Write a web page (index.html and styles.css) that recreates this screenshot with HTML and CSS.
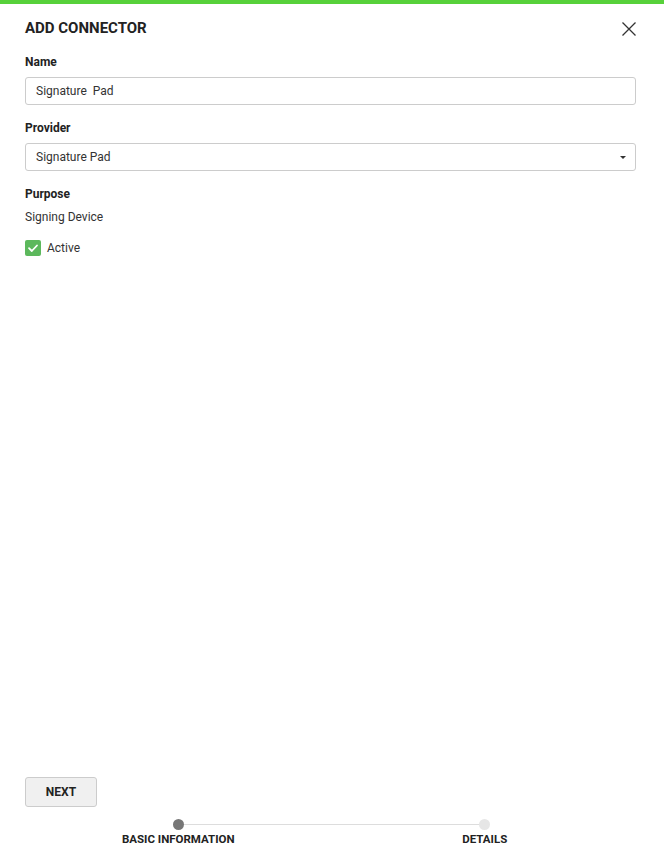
FILE: index.html
```html
<!DOCTYPE html>
<html>
<head>
<meta charset="utf-8">
<link rel="stylesheet" href="styles.css">
</head>
<body>
<div class="dialog">
  <div class="topbar"></div>
  <div class="header">
    <h1 class="title">ADD CONNECTOR</h1>
    <button class="close" aria-label="Close">
      <svg width="16" height="16" viewBox="0 0 16 16"><path d="M1.5 1.5 L14.5 14.5 M14.5 1.5 L1.5 14.5" stroke="#333" stroke-width="1.3" fill="none"/></svg>
    </button>
  </div>
  <div class="body">
    <div class="field">
      <div class="label">Name</div>
      <div class="input">Signature&nbsp; Pad</div>
    </div>
    <div class="field">
      <div class="label">Provider</div>
      <div class="input select">Signature Pad<span class="caret"></span></div>
    </div>
    <div class="field">
      <div class="label">Purpose</div>
      <div class="value">Signing Device</div>
    </div>
    <div class="check-row">
      <span class="checkbox">
        <svg width="16" height="16" viewBox="0 0 16 16"><path d="M4 8.2 L6.8 11 L12 5.5" stroke="#fff" stroke-width="1.8" fill="none" stroke-linecap="round" stroke-linejoin="round"/></svg>
      </span>
      <span class="check-label">Active</span>
    </div>
  </div>
  <div class="footer">
    <button class="btn">NEXT</button>
    <div class="stepper">
      <div class="step active">
        <span class="dot"></span>
        <span class="step-label">BASIC INFORMATION</span>
      </div>
      <div class="step">
        <span class="dot"></span>
        <span class="step-label">DETAILS</span>
      </div>
    </div>
  </div>
</div>
</body>
</html>
```
FILE: styles.css
```css
* { box-sizing: border-box; }
html, body { margin: 0; padding: 0; }
body {
  font-family: Roboto, "Liberation Sans", sans-serif;
  color: #222;
  background: #fff;
}
.dialog {
  width: 664px;
  height: 858px;
  display: flex;
  flex-direction: column;
}
.topbar {
  height: 4px;
  background: #57d13a;
  flex: none;
}
.header {
  display: flex;
  align-items: center;
  justify-content: space-between;
  padding: 14px 27px 0 25px;
}
.title {
  margin: 0;
  font-size: 15px;
  line-height: 21px;
  font-weight: 700;
  color: #222;
}
.close {
  border: 0;
  background: none;
  padding: 0;
  width: 16px;
  height: 16px;
  display: flex;
  cursor: pointer;
}
.body {
  flex: 1;
  padding: 15px 28px 0 25px;
}
.field { margin-bottom: 15px; }
.label {
  font-size: 12px;
  line-height: 16px;
  font-weight: 700;
  color: #222;
  margin-bottom: 7px;
}
.input {
  height: 28px;
  border: 1px solid #ccc;
  border-radius: 3px;
  font-size: 12px;
  line-height: 26px;
  padding: 0 10px;
  color: #333;
  display: flex;
  align-items: center;
}
.select { justify-content: space-between; }
.caret {
  width: 0;
  height: 0;
  border-left: 3px solid transparent;
  border-right: 3px solid transparent;
  border-top: 3px solid #333;
  margin-right: -1px;
}
.value {
  font-size: 12px;
  line-height: 16px;
  color: #333;
}
.check-row {
  display: flex;
  align-items: center;
  gap: 6px;
}
.checkbox {
  width: 16px;
  height: 16px;
  border-radius: 2px;
  background: #5cb85c;
  display: flex;
}
.check-label {
  font-size: 12px;
  color: #333;
}
.footer {
  padding: 0 26px 12px 25px;
}
.btn {
  width: 72px;
  height: 30px;
  border: 1px solid #ccc;
  border-radius: 3px;
  background: #f0f0f0;
  font-family: Roboto, "Liberation Sans", sans-serif;
  font-size: 12px;
  font-weight: 700;
  color: #222;
  padding: 0;
}
.stepper {
  display: flex;
  margin-top: 12px;
}
.step {
  flex: 1;
  display: flex;
  flex-direction: column;
  align-items: center;
  gap: 2px;
  position: relative;
}
.step:first-child::after {
  content: "";
  position: absolute;
  top: 5px;
  left: 50%;
  width: 100%;
  height: 1px;
  background: #ddd;
}
.dot {
  width: 11px;
  height: 11px;
  border-radius: 50%;
  background: #e6e6e6;
  position: relative;
  z-index: 1;
}
.step.active .dot { background: #777; }
.step-label {
  font-size: 11.5px;
  line-height: 14px;
  font-weight: 700;
  color: #222;
}
```
